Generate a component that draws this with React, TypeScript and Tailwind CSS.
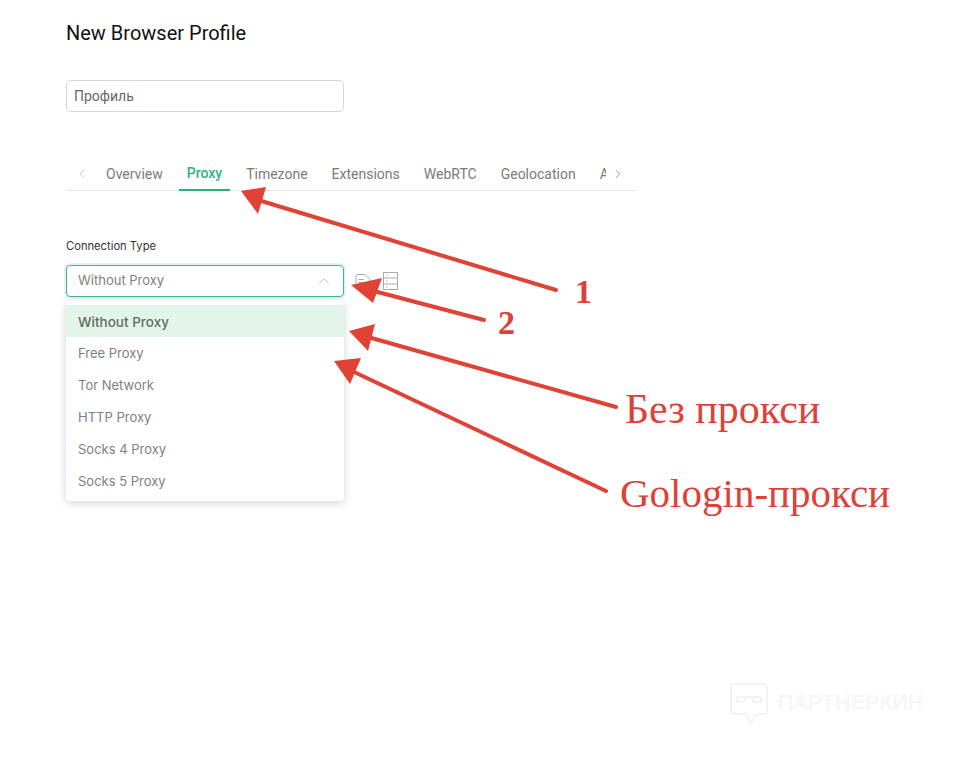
import React from "react";
import { ChevronLeft, ChevronRight, ChevronUp } from "lucide-react";

const tabs = ["Overview", "Proxy", "Timezone", "Extensions", "WebRTC", "Geolocation"];
const options = ["Without Proxy", "Free Proxy", "Tor Network", "HTTP Proxy", "Socks 4 Proxy", "Socks 5 Proxy"];

const arrows = [
  { line: "M556 290 L258 200", head: "241,191 266,187 258,214" },
  { line: "M484 320 L370 290", head: "351,285 382,278 373,303" },
  { line: "M616 407 L368 337", head: "349,331 375,324 368,351" },
  { line: "M606 491 L352 371", head: "334,361 361,358 350,384" },
];

export default function App() {
  return (
    <div className="relative h-[775px] w-[974px] overflow-hidden bg-white font-['Roboto',sans-serif]">
      <div className="flex w-[570px] flex-col pl-[66px] pt-[22px]">
        <h1 className="text-[20px] leading-[22px] text-[#111]">New Browser Profile</h1>
        <div className="mt-[36px] flex h-[32px] w-[278px] items-center rounded-[4px] border border-[#d9d9d9] px-[7px] text-[14px] text-[#666]">
          Профиль
        </div>

        <div className="mt-[45px] flex h-[34px] w-[570px] items-stretch border-b border-[#e8e8e8] text-[14px] text-[#7a7a7a]">
          <div className="flex w-[32px] items-center pl-[9px] text-[#b0b0b0]">
            <ChevronLeft size={14} strokeWidth={1.25} />
          </div>
          <div className="-mb-px flex min-w-0 flex-1 gap-[8px] overflow-hidden">
            {tabs.map((t) => (
              <div
                key={t}
                className={
                  t === "Proxy"
                    ? "flex items-center border-b-2 border-[#2eae7d] px-[8px] font-medium text-[#2bb57e]"
                    : "flex items-center px-[8px]"
                }
              >
                {t}
              </div>
            ))}
            <div className="flex items-center pl-[8px]">A</div>
          </div>
          <div className="flex w-[30px] items-center bg-white pl-[5px] text-[#777]">
            <ChevronRight size={14} strokeWidth={1.25} />
          </div>
        </div>

        <label className="mt-[47px] font-['Inter',sans-serif] text-[11.2px] leading-[16px] text-[#333]">Connection Type</label>

        <div className="mt-[11px] flex items-center gap-[11px]">
          <div className="flex h-[32px] w-[278px] items-center justify-between rounded-[4px] border border-[#43b58a] pl-[11px] pr-[10px] font-['Inter',sans-serif] text-[13px] text-[#808080] shadow-[0_0_0_2px_rgba(67,181,138,0.15)]">
            <span>Without Proxy</span>
            <ChevronUp size={18} strokeWidth={1} className="text-[#aaa]" />
          </div>
          <div className="flex items-center gap-[12px]">
            <svg width="16" height="17" viewBox="0 0 16 17" fill="none" stroke="#aaa" strokeWidth="1">
              <path d="M2.5 1.5H10L15 6.5V15.5H1V3Q1 1.5 2.5 1.5Z" />
              <path d="M3.5 6.5H9M3.5 9.5H9" />
            </svg>
            <svg width="15" height="18" viewBox="0 0 15 18" fill="none" stroke="#aaa" strokeWidth="1">
              <rect x="0.5" y="0.5" width="14" height="17" />
              <path d="M0.5 6H14.5M0.5 12H14.5" />
              <path d="M3 3.2H4.5M3 9H4.5M3 14.8H4.5" />
            </svg>
          </div>
        </div>

        <div className="mt-[4px] w-[278px] rounded-[4px] bg-white py-[4px] font-['Inter',sans-serif] text-[13px] text-[#808080] shadow-[0_2px_8px_rgba(0,0,0,0.18)]">
          {options.map((o, i) => (
            <div
              key={o}
              className={
                i === 0
                  ? "flex h-[32px] items-center bg-[#e3f5ea] px-[12px] pt-[2px] text-[13.5px] font-medium text-[#5f6b64]"
                  : "flex h-[32px] items-center px-[12px] pt-[2px]"
              }
            >
              {o}
            </div>
          ))}
        </div>
      </div>

      {/* Annotations drawn over the screenshot */}
      <svg className="absolute left-0 top-0" width="974" height="775" fill="none">
        {arrows.map((a) => (
          <g key={a.line}>
            <path d={a.line} stroke="#e04236" strokeWidth="4" strokeLinecap="round" />
            <polygon points={a.head} fill="#e04236" />
          </g>
        ))}
      </svg>
      <div className="absolute left-[575px] top-[273px] font-['Liberation_Serif',serif] text-[34px] font-bold leading-[38px] text-[#dc4238]">1</div>
      <div className="absolute left-[498px] top-[304px] font-['Liberation_Serif',serif] text-[34px] font-bold leading-[38px] text-[#dc4238]">2</div>
      <div className="absolute left-[625px] top-[387px] whitespace-nowrap font-['Liberation_Serif',serif] text-[42px] leading-[44px] text-[#dc4238]">Без прокси</div>
      <div className="absolute left-[620px] top-[471px] whitespace-nowrap font-['Liberation_Serif',serif] text-[41px] leading-[44px] text-[#dc4238]">Gologin-прокси</div>

      {/* Watermark */}
      <div className="absolute left-[730px] top-[683px] flex items-center gap-[10px]">
        <svg width="38" height="42" viewBox="0 0 38 42" fill="none" stroke="#f0f0f0" strokeWidth="1.5">
          <path d="M3 1H35A2 2 0 0 1 37 3V29A2 2 0 0 1 35 31H26L21 40L16 31H3A2 2 0 0 1 1 29V3A2 2 0 0 1 3 1Z" />
          <path d="M7 14H31M7 14V19H15V14M23 14V19H31V14" />
        </svg>
        <span className="-mt-[4px] whitespace-nowrap font-['Liberation_Sans',sans-serif] text-[21px] tracking-[0.5px] text-transparent [-webkit-text-stroke:0.6px_#ededed]">ПАРТНЕРКИН</span>
      </div>
    </div>
  );
}
